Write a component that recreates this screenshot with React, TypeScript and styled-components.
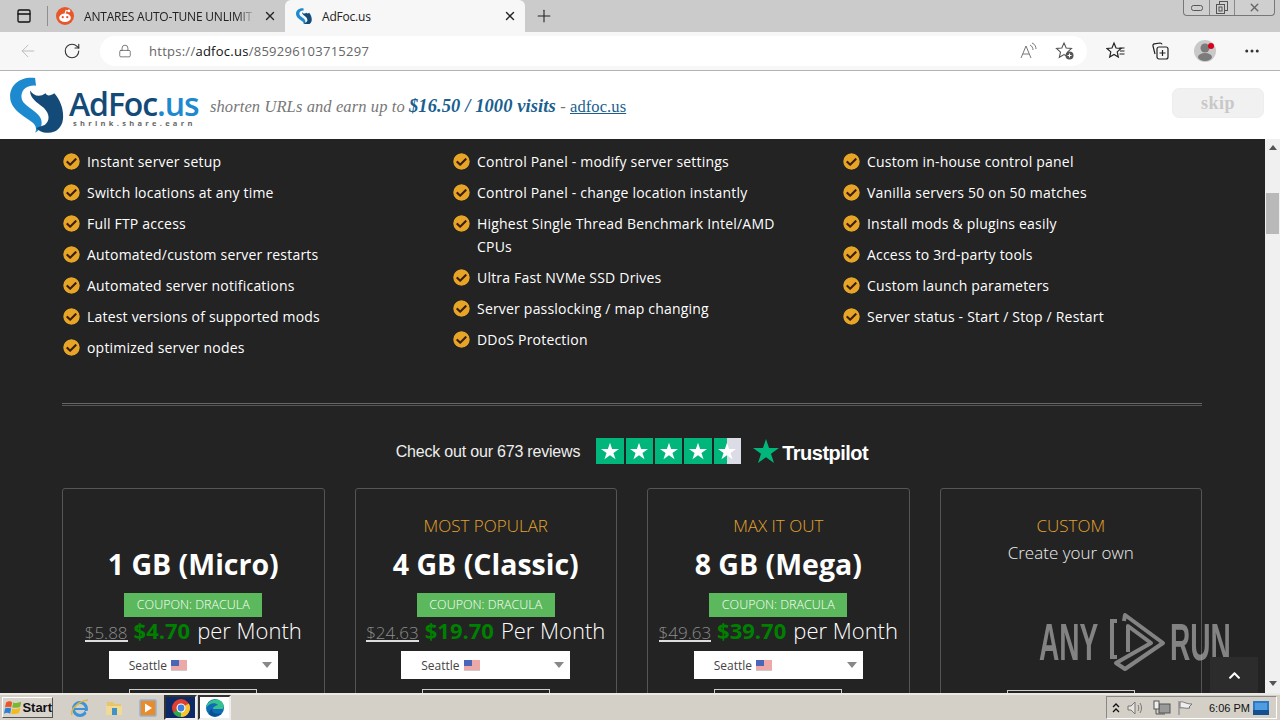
import React from "react";
import styled, { createGlobalStyle } from "styled-components";
import { ArrowLeft, RotateCw, Lock, Plus, X, PanelTop, MoreHorizontal } from "lucide-react";
import { FaCheckCircle, FaChevronUp } from "react-icons/fa";

const GlobalStyle = createGlobalStyle`
  html, body {
    margin: 0;
    padding: 0;
    width: 1280px;
    height: 720px;
    overflow: hidden;
    background: #232323;
  }
`;

const Screen = styled.div`
  width: 1280px;
  height: 720px;
  display: flex;
  flex-direction: column;
  overflow: hidden;
  font-family: "Open Sans", sans-serif;
`;

/* browser tabs */
const TabStrip = styled.div`
  height: 32px;
  flex: none;
  background: #cbcbcb;
  display: flex;
  align-items: flex-end;
  position: relative;
`;

const TabLayoutButton = styled.div`
  width: 47px;
  height: 32px;
  display: flex;
  align-items: center;
  justify-content: center;
  color: #111;
`;

const TabDivider = styled.div`
  width: 1px;
  height: 20px;
  margin: 0 0 6px;
  background: #8e8e8e;
`;

const Tab = styled.div<{ $active?: boolean }>`
  height: 32px;
  width: ${(p) => (p.$active ? "240px" : "237px")};
  box-sizing: border-box;
  padding: 0 8px 0 ${(p) => (p.$active ? "11px" : "8px")};
  background: ${(p) => (p.$active ? "#f7f7f7" : "transparent")};
  border-radius: 6px 6px 0 0;
  display: flex;
  align-items: center;
  color: #222;
  font-size: 12px;
`;

const TabTitle = styled.span<{ $fade?: boolean }>`
  flex: 1;
  margin-left: ${(p) => (p.$fade ? "10px" : "10px")};
  margin-right: ${(p) => (p.$fade ? "8px" : "0")};
  white-space: nowrap;
  letter-spacing: -0.2px;
  mask-image: ${(p) =>
    p.$fade ? "linear-gradient(90deg, #000 90%, transparent 100%)" : "none"};
`;

const NewTab = styled.div`
  width: 38px;
  height: 32px;
  display: flex;
  align-items: center;
  justify-content: center;
  color: #222;
`;

const WindowControls = styled.div`
  position: absolute;
  top: 0;
  right: 5px;
  width: 92px;
  height: 16px;
  box-sizing: border-box;
  border: 1px solid #777;
  border-top: none;
  border-radius: 0 0 4px 4px;
  display: grid;
  grid-template-columns: 26px 25px 1fr;
  background: #cfcfcf;
`;

const WindowButton = styled.div`
  display: flex;
  align-items: center;
  justify-content: center;
  border-right: 1px solid #888;
  color: #666;
  &:last-child {
    border-right: none;
  }
`;

/* address bar */
const Toolbar = styled.div`
  height: 39px;
  flex: none;
  box-sizing: border-box;
  background: #f7f7f7;
  border-bottom: 1px solid #b4b4b4;
  display: flex;
  align-items: center;
`;

const ToolButton = styled.div<{ $width: number; $muted?: boolean }>`
  width: ${(p) => p.$width}px;
  height: 30px;
  flex: none;
  display: flex;
  align-items: center;
  justify-content: center;
  color: ${(p) => (p.$muted ? "#bdbdbd" : "#333")};
`;

const AddressBar = styled.div`
  width: 987px;
  height: 30px;
  flex: none;
  box-sizing: border-box;
  padding-right: 3px;
  margin-right: 7px;
  background: #fff;
  border-radius: 15px;
  display: flex;
  align-items: center;
`;

const LockSlot = styled.div`
  width: 49px;
  flex: none;
  display: flex;
  justify-content: center;
  color: #555;
`;

const Url = styled.div`
  flex: 1;
  font-size: 13px;
  letter-spacing: 0.02em;
  color: #666;
  b {
    font-weight: 400;
    color: #111;
  }
`;

/* ad bar */
const AdBar = styled.div`
  height: 68px;
  flex: none;
  background: #fff;
  display: flex;
  align-items: center;
  padding: 0 16px 0 10px;
`;

const Brand = styled.div`
  display: flex;
  align-items: center;
  width: 200px;
  flex: none;
`;

const BrandText = styled.div`
  margin-left: 5px;
  margin-top: 6px;
  display: flex;
  flex-direction: column;
`;

const BrandName = styled.div`
  font-family: "Open Sans", sans-serif;
  font-weight: 600;
  font-size: 32px;
  line-height: 31px;
  letter-spacing: -1.1px;
  color: #134a78;
  span {
    color: #1d8ad0;
  }
`;

const BrandTag = styled.div`
  font-size: 7.5px;
  line-height: 9px;
  font-weight: 700;
  letter-spacing: 3.3px;
  color: #666;
  margin-left: 4px;
`;

const AdText = styled.div`
  flex: 1;
  font-family: "Liberation Serif", serif;
  font-style: italic;
  font-size: 16.5px;
  color: #777;
  letter-spacing: 0.1px;
  margin-top: 2px;
  b {
    color: #1a5f8f;
    font-size: 18.5px;
  }
  a {
    font-style: normal;
    color: #1a5f8f;
    text-decoration: underline;
  }
`;

const SkipButton = styled.div`
  width: 92px;
  height: 30px;
  margin-top: -4px;
  border-radius: 7px;
  border: 1px solid #eee;
  background: #f1f1f1;
  color: #c8c8c8;
  font-family: "Liberation Serif", serif;
  font-weight: 700;
  font-size: 18px;
  letter-spacing: 0.5px;
  display: flex;
  align-items: center;
  justify-content: center;
  box-sizing: border-box;
`;

/* page */
const PageRow = styled.div`
  flex: 1;
  min-height: 0;
  display: flex;
  position: relative;
`;

const Page = styled.div`
  flex: 1;
  min-width: 0;
  overflow: hidden;
  background: #232323;
  padding: 11px 63px 0 62px;
  box-sizing: border-box;
`;

const Features = styled.div`
  display: grid;
  grid-template-columns: repeat(3, 390px);
  height: 253px;
`;

const FeatureList = styled.ul`
  list-style: none;
  margin: 0;
  padding: 0 0 0 1px;
`;

const Feature = styled.li`
  display: flex;
  align-items: flex-start;
  margin-bottom: 8px;
  color: #fff;
  font-size: 14px;
  line-height: 23px;
  letter-spacing: 0.2px;
  width: 325px;
`;

const FeatureIcon = styled.span`
  flex: none;
  width: 24px;
  height: 23px;
  display: flex;
  align-items: center;
  color: #e6a526;
  svg {
    background: radial-gradient(circle, #3a1c10 55%, transparent 56%);
    border-radius: 50%;
  }
`;

const Rule = styled.hr`
  margin: 0 0 31px;
  height: 1px;
  border: none;
  border-top: 1px solid #666;
  border-bottom: 1px solid #555;
`;

const TrustRow = styled.div`
  display: flex;
  align-items: center;
  justify-content: center;
  height: 28px;
  margin-bottom: 23px;
`;

const TrustLabel = styled.span`
  font-family: "Liberation Sans", sans-serif;
  font-size: 16px;
  color: #eee;
  margin: 1px 16px 0 0;
  letter-spacing: -0.2px;
`;

const StarBoxes = styled.div`
  display: flex;
  gap: 2px;
  margin-right: 12px;
`;

const StarBox = styled.div<{ $half?: boolean }>`
  width: 27.4px;
  height: 26px;
  background: ${(p) =>
    p.$half ? "linear-gradient(90deg, #00b67a 50%, #dcdce6 50%)" : "#00b67a"};
  display: flex;
  align-items: center;
  justify-content: center;
`;

const TrustLogo = styled.div`
  display: flex;
  align-items: center;
`;

const TrustName = styled.span`
  font-family: "Liberation Sans", sans-serif;
  font-weight: 700;
  font-size: 20px;
  letter-spacing: -0.5px;
  color: #fff;
  margin: 4px 0 0 3px;
`;

const Plans = styled.div`
  display: grid;
  grid-template-columns: repeat(4, 1fr);
  gap: 30px;
`;

const PlanCard = styled.div`
  height: 300px;
  box-sizing: border-box;
  border: 1px solid #555;
  border-radius: 3px;
  padding-top: 26px;
  display: flex;
  flex-direction: column;
  align-items: center;
`;

const PlanTag = styled.div`
  height: 22px;
  font-size: 17px;
  line-height: 22px;
  font-weight: 300;
  color: #e3a52d;
`;

const PlanSub = styled.div`
  font-size: 17px;
  line-height: 22px;
  font-weight: 300;
  color: #eee;
  margin-top: 5px;
`;

const PlanTitle = styled.div`
  font-size: 28.5px;
  line-height: 38px;
  font-weight: 700;
  color: #fff;
  margin-top: 8px;
  white-space: nowrap;
`;

const Coupon = styled.div`
  width: 138px;
  height: 24px;
  margin-top: 10px;
  background: #5cb85c;
  color: #fff;
  font-size: 12.5px;
  font-weight: 300;
  line-height: 24px;
  text-align: center;
`;

const PriceLine = styled.div`
  margin-top: -1px;
  font-size: 22px;
  line-height: 28px;
  font-weight: 300;
  color: #fff;
  white-space: nowrap;
`;

const OldPrice = styled.span`
  display: inline-block;
  font-size: 17px;
  line-height: 15px;
  color: #8c8c8c;
  border-bottom: 2px solid #ddd;
  margin-right: 6px;
`;

const NewPrice = styled.b`
  font-weight: 700;
  font-size: 22px;
  color: #008000;
  margin-right: 7px;
`;

const LocationSelect = styled.div`
  width: 169px;
  height: 28px;
  flex: none;
  margin-top: 7px;
  box-sizing: border-box;
  padding: 0 6px 0 20px;
  background: #fff;
  display: flex;
  align-items: center;
  gap: 4px;
  font-size: 12px;
  color: #444;
`;

const SelectCaret = styled.span`
  margin-left: auto;
  width: 0;
  height: 0;
  border-left: 5px solid transparent;
  border-right: 5px solid transparent;
  border-top: 6px solid #888;
`;

const OrderButton = styled.div<{ $custom?: boolean }>`
  width: 128px;
  height: 38px;
  flex: none;
  margin-top: ${(p) => (p.$custom ? "126px" : "10px")};
  box-sizing: border-box;
  border: 1px solid #ccc;
`;

const Scrollbar = styled.div`
  width: 15px;
  flex: none;
  background: #f0f0f0;
  position: relative;
  display: flex;
  flex-direction: column;
  align-items: center;
  justify-content: space-between;
  padding: 6px 0 7px;
  box-sizing: border-box;
`;

const ScrollArrow = styled.span<{ $down?: boolean }>`
  width: 0;
  height: 0;
  border-left: 4px solid transparent;
  border-right: 4px solid transparent;
  border-bottom: ${(p) => (p.$down ? "none" : "5px solid #555")};
  border-top: ${(p) => (p.$down ? "5px solid #555" : "none")};
`;

const ScrollThumb = styled.div`
  position: absolute;
  top: 54px;
  left: 1px;
  width: 13px;
  height: 41px;
  background: #b9b9b9;
`;

const BackToTop = styled.div`
  position: absolute;
  right: 22px;
  bottom: 0;
  width: 48px;
  height: 36px;
  background: #2c2c2c;
  color: #fff;
  display: flex;
  align-items: center;
  justify-content: center;
`;

const Watermark = styled.div`
  position: absolute;
  left: 1039px;
  top: 472px;
  display: flex;
  align-items: center;
  pointer-events: none;
  color: rgba(190, 190, 190, 0.62);
`;

const WatermarkWord = styled.span<{ $width: number }>`
  display: block;
  width: ${(p) => p.$width}px;
  font-family: "Liberation Sans", sans-serif;
  font-weight: 700;
  font-size: 52px;
  line-height: 60px;
  transform: scaleX(0.54);
  transform-origin: left center;
  white-space: nowrap;
`;

/* windows taskbar */
const Taskbar = styled.div`
  height: 27px;
  flex: none;
  box-sizing: border-box;
  background: #d4d0c8;
  border-top: 2px solid #ece9e2;
  display: flex;
  align-items: center;
  padding: 0 3px 0 2px;
`;

const StartButton = styled.div`
  width: 51px;
  height: 21px;
  box-sizing: border-box;
  background: #d8d4cc;
  border: 1px solid;
  border-color: #fff #555 #555 #fff;
  display: flex;
  align-items: center;
  gap: 1px;
  padding-left: 1px;
  font-family: "Liberation Sans", sans-serif;
  font-weight: 700;
  font-size: 13px;
  color: #111;
  margin-right: 10px;
`;

const QuickIcon = styled.div<{ $variant?: "dark" | "light" }>`
  width: 33px;
  height: 25px;
  flex: none;
  display: flex;
  align-items: center;
  justify-content: center;
  box-sizing: border-box;
  background: ${(p) =>
    p.$variant === "dark" ? "#0d2a66" : p.$variant === "light" ? "#fff" : "transparent"};
  border: ${(p) => (p.$variant ? "2px solid #333" : "none")};
  border-right-color: ${(p) => (p.$variant ? "#eee" : "transparent")};
  border-bottom-color: ${(p) => (p.$variant ? "#eee" : "transparent")};
  margin-right: 1px;
  &:nth-of-type(5) {
    margin-left: -1px;
  }
`;

const Tray = styled.div`
  margin-left: auto;
  width: 171px;
  height: 23px;
  box-sizing: border-box;
  border: 1px solid;
  border-color: #888 #fff #fff #888;
  display: flex;
  align-items: center;
  padding-left: 3px;
  font-family: "Liberation Sans", sans-serif;
  font-size: 11px;
  color: #111;
`;

const TrayClock = styled.span`
  margin-left: 11px;
  width: 44px;
  white-space: nowrap;
`;

const TraySlot = styled.span<{ $width: number }>`
  width: ${(p) => p.$width}px;
  flex: none;
  display: flex;
  align-items: center;
  justify-content: center;
`;

const LogoMark = ({ size }: { size: number }) => (
  <svg width={size} height={size * 1.05} viewBox="0 0 56 59">
    <path
      d="M26 1C11-1 0 8 0 20c0 14 14 20 23 27 4 3 5 7 3 11 8-4 9-13 3-19-8-8-19-11-17-21 1-6 7-10 15-9z"
      fill="#1d8ad0"
    />
    <path
      d="M21 14c3 5 9 8 16 3 1 3 5 3 9 0 7 8 10 18 9 27-1 9-8 15-17 14-4 0-8-2-11-5l9-3c6-5 5-12-1-18-8-6-15-11-14-18z"
      fill="#134a78"
    />
  </svg>
);

const RedditIcon = () => (
  <svg width="18" height="18" viewBox="0 0 16 16">
    <circle cx="8" cy="8" r="8" fill="#e8572a" />
    <ellipse cx="8" cy="9.5" rx="5.2" ry="3.8" fill="#fff" />
    <circle cx="6" cy="9" r="1" fill="#e8572a" />
    <circle cx="10" cy="9" r="1" fill="#e8572a" />
    <circle cx="11.5" cy="3.5" r="1.2" fill="#fff" />
    <path d="M8 6l1-3 2 .5" stroke="#fff" fill="none" />
  </svg>
);

const ReadAloudIcon = () => (
  <svg width="18" height="18" viewBox="0 0 18 18" fill="none" stroke="#777" strokeWidth="1">
    <path d="M2 16L7 4l5 12M4 12h6" />
    <path d="M11 3c2 1 3 3 3 5M13 1c3 1 4 4 4 6" />
  </svg>
);

const FavoriteAddIcon = () => (
  <svg width="20" height="20" viewBox="0 0 20 20" fill="none" stroke="#555" strokeWidth="1.1">
    <path d="M9 2l2.2 5 5.3.5-4 3.6 1.2 5.2L9 13.6l-4.7 2.7 1.2-5.2-4-3.6L6.800 7z" />
    <circle cx="14.500" cy="14.500" r="4" fill="#555" stroke="none" />
    <path d="M14.500 12.500v4M12.500 14.500h4" stroke="#fff" />
  </svg>
);

const FavoritesIcon = () => (
  <svg width="20" height="20" viewBox="0 0 20 20" fill="none" stroke="#222" strokeWidth="1.200">
    <path d="M8 2l2 5 5 .5-3.800 3.400 1.100 5.100L8 13.400 3.700 16l1.100-5.100L1 7.500 6 7z" />
    <path d="M13.500 7h5M14 10h4.500M13.500 13h5" />
  </svg>
);

const CollectionsIcon = () => (
  <svg width="20" height="20" viewBox="0 0 20 20" fill="none" stroke="#222" strokeWidth="1.200">
    <path d="M5 13L3 5c-.3-1 .3-2 1.300-2.200L10 2c1 0 1.800.4 2 1.400" />
    <rect x="7" y="6" width="11" height="12" rx="2" />
    <path d="M12.500 9v6M9.500 12h6" />
  </svg>
);

const ProfileIcon = () => (
  <svg width="26" height="26" viewBox="0 0 26 26">
    <circle cx="12" cy="13" r="11" fill="#c9c9c9" />
    <circle cx="12" cy="10" r="4.500" fill="#7b7b7b" />
    <ellipse cx="12" cy="19" rx="7" ry="4" fill="#7b7b7b" />
    <circle cx="18" cy="8" r="3" fill="#d9001b" />
  </svg>
);

const UsFlag = () => (
  <svg width="16" height="11" viewBox="0 0 16 11">
    <rect width="16" height="11" fill="#fff" />
    <path d="M0 1h16M0 3h16M0 5h16M0 7h16M0 9h16" stroke="#d9534f" strokeWidth="1" />
    <rect width="8" height="6" fill="#4a66b8" />
    <rect y="10.500" width="16" height=".5" fill="#999" />
  </svg>
);

const TrustStar = ({ size, color }: { size: number; color: string }) => (
  <svg width={size} height={size} viewBox="0 0 24 24">
    <path d="M12 1l2.800 8.300H24l-7.400 5.300 2.800 8.400L12 17.800 4.600 23l2.800-8.400L0 9.300h9.200z" fill={color} />
  </svg>
);

const AnyRunMark = () => (
  <svg width="63" height="62" viewBox="0 0 63 62" fill="none" stroke="rgba(190,190,190,.62)" strokeWidth="4">
    <path d="M10 10H5v36h5" />
    <path d="M17 10l1-6 38 28-38 26-9-6 35-20-23-17v26" strokeLinejoin="round" />
  </svg>
);

const WindowsFlag = () => (
  <svg width="18" height="17" viewBox="0 0 17 16">
    <path d="M2 3c3-2 5-1 6 0l-1 5C5 7 3 7 1 8z" fill="#e8562a" />
    <path d="M9 3c2 1 5 1 8-1l-1 5c-3 2-6 1-8 1z" fill="#7cb82f" />
    <path d="M1 9c2-1 4-1 6 0l-1 5c-2-1-4-1-6 0z" fill="#2d7fd3" />
    <path d="M8 9c2 1 5 1 8-1l-1 5c-3 2-6 1-8 1z" fill="#f5b918" />
  </svg>
);

const IeIcon = () => (
  <svg width="20" height="20" viewBox="0 0 20 20" fill="none">
    <circle cx="10" cy="11" r="6.500" stroke="#3b93d9" strokeWidth="3" />
    <path d="M4 11h12" stroke="#3b93d9" strokeWidth="2" />
    <path d="M15 13l4 0-2 3z" fill="#d4d0c8" />
    <path d="M2 17C0 12 8 3 18 2" stroke="#e0b63a" strokeWidth="1.500" />
  </svg>
);

const ExplorerIcon = () => (
  <svg width="20" height="20" viewBox="0 0 20 20">
    <path d="M3 4h6l2 2h6v3H3z" fill="#eac46a" />
    <rect x="2" y="8" width="16" height="9" fill="#f1d996" />
    <rect x="8" y="10" width="5" height="7" fill="#3e93c8" />
  </svg>
);

const MediaIcon = () => (
  <svg width="20" height="20" viewBox="0 0 20 20">
    <rect x="2" y="2" width="16" height="16" rx="1" fill="#e98a2b" stroke="#8fb4d6" strokeWidth="1.500" />
    <path d="M7 5.500l7 4.500-7 4.500z" fill="#fff" />
  </svg>
);

const ChromeIcon = () => (
  <svg width="20" height="20" viewBox="0 0 20 20">
    <circle cx="10" cy="10" r="9" fill="#e0402f" />
    <path d="M10 10L2.200 14.500A9 9 0 0 0 10 19z" fill="#2ea84f" />
    <path d="M10 10l7.800-4.500A9 9 0 0 1 10 19z" fill="#f7c62f" />
    <circle cx="10" cy="10" r="4.500" fill="#fff" />
    <circle cx="10" cy="10" r="3.400" fill="#3b7fe0" />
  </svg>
);

const EdgeIcon = () => (
  <svg width="20" height="20" viewBox="0 0 20 20">
    <circle cx="10" cy="10" r="9" fill="#0f6cb4" />
    <path d="M1 10C2 3 10-1 16 3c3 2 3 6 2 8H8c0-3 5-4 5-4-3-3-9-2-12 3z" fill="#36c28f" />
    <path d="M7 11c0 4 4 6 9 4-2 3-6 4-9 3-3-1-4-5 0-7z" fill="#0b4f90" />
  </svg>
);

const TrayVolume = () => (
  <svg width="18" height="16" viewBox="0 0 18 16" fill="#e8e4dc" stroke="#777" strokeWidth="1">
    <path d="M1 6h3l4-4v12l-4-4H1z" />
    <path d="M11 5c1 2 1 4 0 6M13 3c2 3 2 7 0 10" fill="none" />
  </svg>
);

const TrayNetwork = () => (
  <svg width="18" height="16" viewBox="0 0 18 16" stroke="#555" strokeWidth="1">
    <rect x="6" y="4" width="11" height="9" fill="#999" />
    <rect x="1" y="1" width="5" height="8" fill="#eee" />
    <path d="M3 9v5h9" fill="none" />
  </svg>
);

const TrayFlag = () => (
  <svg width="18" height="16" viewBox="0 0 18 16" stroke="#777" strokeWidth="1">
    <path d="M2 1v14" />
    <path d="M3 2c4-1 5 2 12 2l-3 3 1 1c-5 1-7-1-10 0z" fill="#eee" />
  </svg>
);

const ShowDesktop = () => (
  <svg width="16" height="14" viewBox="0 0 16 14">
    <rect width="16" height="14" fill="#2a78c8" />
    <rect y="9" width="16" height="5" fill="#14508f" />
    <rect x="2" y="2" width="12" height="7" fill="#4f9ce0" />
  </svg>
);

const featureColumns: string[][] = [
  [
    "Instant server setup",
    "Switch locations at any time",
    "Full FTP access",
    "Automated/custom server restarts",
    "Automated server notifications",
    "Latest versions of supported mods",
    "optimized server nodes",
  ],
  [
    "Control Panel - modify server settings",
    "Control Panel - change location instantly",
    "Highest Single Thread Benchmark Intel/AMD CPUs",
    "Ultra Fast NVMe SSD Drives",
    "Server passlocking / map changing",
    "DDoS Protection",
  ],
  [
    "Custom in-house control panel",
    "Vanilla servers 50 on 50 matches",
    "Install mods & plugins easily",
    "Access to 3rd-party tools",
    "Custom launch parameters",
    "Server status - Start / Stop / Restart",
  ],
];

const plans = [
  { tag: "", title: "1 GB (Micro)", was: "$5.88", now: "$4.70", per: "per Month" },
  { tag: "MOST POPULAR", title: "4 GB (Classic)", was: "$24.63", now: "$19.70", per: "Per Month" },
  { tag: "MAX IT OUT", title: "8 GB (Mega)", was: "$49.63", now: "$39.70", per: "per Month" },
];

function App() {
  return (
    <Screen>
      <GlobalStyle />
      <TabStrip>
        <TabLayoutButton>
          <PanelTop size={16} strokeWidth={2} />
        </TabLayoutButton>
        <TabDivider />
        <Tab>
          <RedditIcon />
          <TabTitle $fade>ANTARES AUTO-TUNE UNLIMIT</TabTitle>
          <X size={14} strokeWidth={2.4} />
        </Tab>
        <Tab $active>
          <LogoMark size={16} />
          <TabTitle>AdFoc.us</TabTitle>
          <X size={14} strokeWidth={2.4} />
        </Tab>
        <NewTab>
          <Plus size={20} strokeWidth={1.3} />
        </NewTab>
        <WindowControls>
          <WindowButton>
            <svg width="12" height="6" viewBox="0 0 12 6" fill="none" stroke="#555">
              <rect x=".5" y=".5" width="11" height="5" rx="2" />
            </svg>
          </WindowButton>
          <WindowButton>
            <svg width="12" height="13" viewBox="0 0 12 13" fill="none" stroke="#555">
              <rect x="3.500" y=".5" width="8" height="9" />
              <rect x=".5" y="3.500" width="8" height="9" fill="#cfcfcf" />
              <rect x="3" y="6" width="3" height="4" />
            </svg>
          </WindowButton>
          <WindowButton>
            <X size={13} strokeWidth={2.6} />
          </WindowButton>
        </WindowControls>
      </TabStrip>

      <Toolbar>
        <ToolButton $width={56} $muted>
          <ArrowLeft size={20} strokeWidth={1.2} />
        </ToolButton>
        <ToolButton $width={32}>
          <RotateCw size={18} strokeWidth={1.5} />
        </ToolButton>
        <ToolButton $width={12} />
        <AddressBar>
          <LockSlot>
            <Lock size={14} strokeWidth={1.3} />
          </LockSlot>
          <Url>
            https://<b>adfoc.us</b>/859296103715297
          </Url>
          <ToolButton $width={36}>
            <ReadAloudIcon />
          </ToolButton>
          <ToolButton $width={38}>
            <FavoriteAddIcon />
          </ToolButton>
        </AddressBar>
        <ToolButton $width={44}>
          <FavoritesIcon />
        </ToolButton>
        <ToolButton $width={44}>
          <CollectionsIcon />
        </ToolButton>
        <ToolButton $width={48}>
          <ProfileIcon />
        </ToolButton>
        <ToolButton $width={44}>
          <MoreHorizontal size={18} strokeWidth={2} />
        </ToolButton>
      </Toolbar>

      <AdBar>
        <Brand>
          <LogoMark size={54} />
          <BrandText>
            <BrandName>
              AdFoc<span>.us</span>
            </BrandName>
            <BrandTag>shrink.share.earn</BrandTag>
          </BrandText>
        </Brand>
        <AdText>
          shorten URLs and earn up to <b>$16.50 / 1000 visits</b> - <a>adfoc.us</a>
        </AdText>
        <SkipButton>skip</SkipButton>
      </AdBar>

      <PageRow>
        <Page>
          <Features>
            {featureColumns.map((column, i) => (
              <FeatureList key={i}>
                {column.map((text) => (
                  <Feature key={text}>
                    <FeatureIcon>
                      <FaCheckCircle size={17} />
                    </FeatureIcon>
                    <span>{text}</span>
                  </Feature>
                ))}
              </FeatureList>
            ))}
          </Features>
          <Rule />
          <TrustRow>
            <TrustLabel>Check out our 673 reviews</TrustLabel>
            <StarBoxes>
              {[0, 1, 2, 3, 4].map((n) => (
                <StarBox key={n} $half={n === 4}>
                  <TrustStar size={18} color="#fff" />
                </StarBox>
              ))}
            </StarBoxes>
            <TrustLogo>
              <TrustStar size={26} color="#00b67a" />
              <TrustName>Trustpilot</TrustName>
            </TrustLogo>
          </TrustRow>
          <Plans>
            {plans.map((plan) => (
              <PlanCard key={plan.title}>
                <PlanTag>{plan.tag}</PlanTag>
                <PlanTitle>{plan.title}</PlanTitle>
                <Coupon>COUPON: DRACULA</Coupon>
                <PriceLine>
                  <OldPrice>{plan.was}</OldPrice>
                  <NewPrice>{plan.now}</NewPrice>
                  {plan.per}
                </PriceLine>
                <LocationSelect>
                  Seattle <UsFlag />
                  <SelectCaret />
                </LocationSelect>
                <OrderButton />
              </PlanCard>
            ))}
            <PlanCard>
              <PlanTag>CUSTOM</PlanTag>
              <PlanSub>Create your own</PlanSub>
              <OrderButton $custom />
            </PlanCard>
          </Plans>
        </Page>
        <Scrollbar>
          <ScrollArrow />
          <ScrollThumb />
          <ScrollArrow $down />
        </Scrollbar>
        <Watermark>
          <WatermarkWord $width={68}>ANY</WatermarkWord>
          <AnyRunMark />
          <WatermarkWord $width={62}>RUN</WatermarkWord>
        </Watermark>
        <BackToTop>
          <FaChevronUp size={13} />
        </BackToTop>
      </PageRow>

      <Taskbar>
        <StartButton>
          <WindowsFlag />
          Start
        </StartButton>
        <QuickIcon>
          <IeIcon />
        </QuickIcon>
        <QuickIcon>
          <ExplorerIcon />
        </QuickIcon>
        <QuickIcon>
          <MediaIcon />
        </QuickIcon>
        <QuickIcon $variant="dark">
          <ChromeIcon />
        </QuickIcon>
        <QuickIcon $variant="light">
          <EdgeIcon />
        </QuickIcon>
        <Tray>
          <TraySlot $width={12}>
            <svg width="8" height="10" viewBox="0 0 8 10" fill="none" stroke="#111" strokeWidth="1.300">
              <path d="M1 4l3-3 3 3M1 9l3-3 3 3" />
            </svg>
          </TraySlot>
          <TraySlot $width={28}>
            <TrayVolume />
          </TraySlot>
          <TraySlot $width={24}>
            <TrayNetwork />
          </TraySlot>
          <TraySlot $width={24}>
            <TrayFlag />
          </TraySlot>
          <TrayClock>6:06 PM</TrayClock>
          <ShowDesktop />
        </Tray>
      </Taskbar>
    </Screen>
  );
}

export default App;
